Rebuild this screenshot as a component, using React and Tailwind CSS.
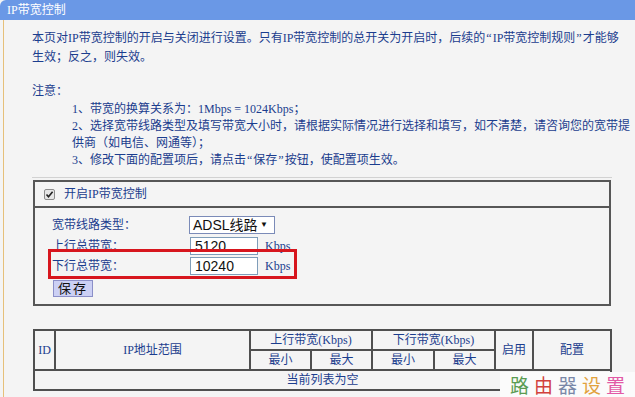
import React from "react";

const Q = ({ children }) => <span className="px-px">{children}</span>;

function CheckBox() {
  return (
    <svg width="11" height="11" viewBox="0 0 11 11">
      <rect x="0.5" y="0.5" width="10" height="10" rx="1.5" fill="#e6e6e6" stroke="#8c8c8c" />
      <path d="M2.5 5.5 L4.5 7.8 L8.6 2.8" fill="none" stroke="#222" strokeWidth="1.6" />
    </svg>
  );
}

export default function App() {
  return (
    <div className="w-[635px] h-[397px] relative overflow-hidden bg-[#f4f4f4] text-[12px] text-[#1b3d8e] font-['Liberation_Serif','Noto_Sans_CJK_SC',serif]">
      <div className="h-[20px] bg-[#6a98e6] rounded-tl-[6px] pl-[7px] leading-[20px] text-white">IP带宽控制</div>

      <div className="ml-[3px] h-[377px] border-l border-[#e6c07a] pl-[28px] pt-[9px]">
        <p className="leading-[19px] whitespace-nowrap">
          本页对IP带宽控制的开启与关闭进行设置。只有IP带宽控制的总开关为开启时，后续的<Q>“</Q>IP带宽控制规则<Q>”</Q>才能够
          <br />
          生效；反之，则失效。
        </p>
        <p className="mt-[15px] leading-[19px]">注意：</p>
        <div className="pl-[40px] leading-[17px] whitespace-nowrap">
          <div>1、带宽的换算关系为：1Mbps = 1024Kbps；</div>
          <div>2、选择宽带线路类型及填写带宽大小时，请根据实际情况进行选择和填写，如不清楚，请咨询您的宽带提</div>
          <div>供商（如电信、网通等）；</div>
          <div>3、修改下面的配置项后，请点击<Q>“</Q>保存<Q>”</Q>按钮，使配置项生效。</div>
        </div>

        <div className="mt-[8px] w-[580px] h-px bg-[#d2d2d2]" />

        <div className="mt-[2px] ml-px w-[578px] border-2 border-[#575757]">
          <div className="h-[26px] flex items-center gap-[9px] pl-[9px] border-b-2 border-[#575757]">
            <CheckBox />
            <span>开启IP带宽控制</span>
          </div>
          <div className="relative pl-[17px] pt-[8px] pb-[7px]">
            <div className="h-[18px] flex items-center">
              <span className="w-[137px]">宽带线路类型：</span>
              <div className="w-[86px] h-[18px] bg-white border border-[#7b8bb8] flex items-center justify-between pl-[3px] pr-[6px] text-[14px] text-[#111] font-['Liberation_Sans','Noto_Sans_CJK_SC',sans-serif]">
                <span className="leading-[16px]">ADSL线路</span>
                <span className="text-[8px]">▼</span>
              </div>
            </div>
            <div className="mt-[3px] h-[18px] flex items-center">
              <span className="w-[137px]">上行总带宽：</span>
              <div className="ml-px w-[68px] h-[18px] bg-white border border-[#7f9db9] pl-[4px] leading-[16px] text-[14px] text-[#111] font-['Liberation_Sans',sans-serif]">5120</div>
              <span className="ml-[7px]">Kbps</span>
            </div>
            <div className="mt-[2px] h-[18px] flex items-center">
              <span className="w-[137px]">下行总带宽：</span>
              <div className="ml-px w-[68px] h-[18px] bg-white border border-[#7f9db9] pl-[4px] leading-[16px] text-[14px] text-[#111] font-['Liberation_Sans',sans-serif]">10240</div>
              <span className="ml-[7px]">Kbps</span>
            </div>
            <button className="mt-[5px] ml-px w-[40px] h-[17px] bg-[#ccd0f4] border border-[#8b8fc8] text-[13px] leading-[15px] text-[#111] tracking-[2px] block">
              保存
            </button>
            <div className="absolute left-[13px] top-[41px] w-[249px] h-[30px] border-[3px] border-[#d7161e] pointer-events-none" />
          </div>
        </div>

        <table className="mt-[23px] ml-px w-[577px] table-fixed border-collapse text-center">
          <colgroup>
            <col className="w-[21px]" />
            <col className="w-[195px]" />
            <col className="w-[61px]" />
            <col className="w-[61px]" />
            <col className="w-[62px]" />
            <col className="w-[61px]" />
            <col className="w-[38px]" />
            <col className="w-[78px]" />
          </colgroup>
          <tbody>
            <tr className="h-[19px]">
              <td rowSpan={2} className="border-2 border-[#4f4f4f] p-0">ID</td>
              <td rowSpan={2} className="border-2 border-[#4f4f4f] p-0">IP地址范围</td>
              <td colSpan={2} className="border-2 border-[#4f4f4f] p-0">上行带宽(Kbps)</td>
              <td colSpan={2} className="border-2 border-[#4f4f4f] p-0">下行带宽(Kbps)</td>
              <td rowSpan={2} className="border-2 border-[#4f4f4f] p-0">启用</td>
              <td rowSpan={2} className="border-2 border-[#4f4f4f] p-0">配置</td>
            </tr>
            <tr className="h-[19px]">
              <td className="border-2 border-[#4f4f4f] p-0">最小</td>
              <td className="border-2 border-[#4f4f4f] p-0">最大</td>
              <td className="border-2 border-[#4f4f4f] p-0">最小</td>
              <td className="border-2 border-[#4f4f4f] p-0">最大</td>
            </tr>
            <tr className="h-[19px]">
              <td colSpan={8} className="border-2 border-[#4f4f4f] p-0">当前列表为空</td>
            </tr>
          </tbody>
        </table>
      </div>

      <div className="absolute right-0 bottom-0 w-[135px] h-[25px] bg-[#fbfbfb] flex items-center gap-[5px] pl-[10px] text-[19px] leading-none font-['Noto_Sans_CJK_SC',sans-serif]">
        <span className="text-[#5a9c52]">路</span>
        <span className="text-[#d2403c]">由</span>
        <span className="text-[#7a88a8]">器</span>
        <span className="text-[#e2a23e]">设</span>
        <span className="text-[#e25aa6]">置</span>
      </div>
    </div>
  );
}
